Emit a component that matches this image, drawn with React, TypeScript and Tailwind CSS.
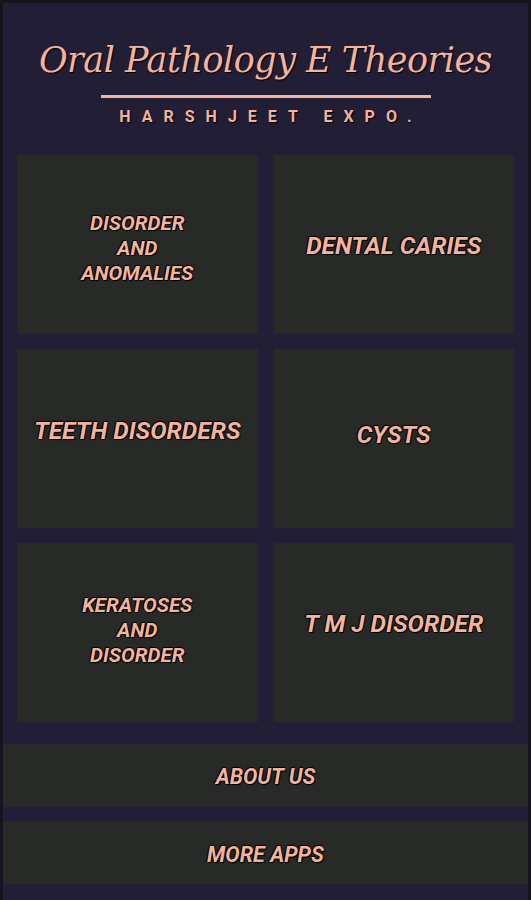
const tiles = [
  { lines: ["DISORDER", "AND", "ANOMALIES"], nudge: "mt-[7px]" },
  { lines: ["DENTAL CARIES"], nudge: "mt-[3px]" },
  { lines: ["TEETH DISORDERS"], nudge: "mb-[15px]" },
  { lines: ["CYSTS"], nudge: "mb-[7px]" },
  { lines: ["KERATOSES", "AND", "DISORDER"], nudge: "mb-[5px]" },
  { lines: ["T M J DISORDER"], nudge: "mb-[17px]" },
];

const label =
  "font-['Roboto',sans-serif] font-bold italic text-[#f3b39d] text-center [text-shadow:1px_1px_1px_#000,-1px_0_1px_#000,0_-1px_1px_#000]";

export default function App() {
  return (
    <div className="w-[531px] h-[900px] bg-[#16141f] px-[3px] pt-[3px] overflow-hidden">
      <div className="h-full bg-[#221e36] flex flex-col">
        <header className="flex flex-col items-center pt-[34px] pb-[30px]">
          <h1 className="font-['DejaVu_Serif',serif] italic text-[35px] leading-[46px] text-[#f3b39d] tracking-[-0.5px] [text-shadow:1px_1px_1px_#000]">
            Oral Pathology E Theories
          </h1>
          <div className="mt-[12px] w-[330px] h-[3px] bg-[#f3b39d]" />
          <p className="mt-[11px] pl-[11px] font-['Roboto',sans-serif] font-bold text-[16px] leading-[16px] tracking-[11px] text-[#f3b39d] [text-shadow:1px_1px_1px_#000]">
            HARSHJEET EXPO.
          </p>
        </header>

        <div className="grid grid-cols-2 gap-x-[16px] gap-y-[15px] px-[14px]">
          {tiles.map((t, i) => (
            <div
              key={i}
              className="h-[179px] bg-[#272a27] flex flex-col items-center justify-center"
            >
              <div className={`flex flex-col items-center ${t.nudge}`}>
                {t.lines.length > 1 ? (
                  t.lines.map((l) => (
                    <span key={l} className={`${label} text-[20.5px] leading-[25px]`}>
                      {l}
                    </span>
                  ))
                ) : (
                  <span className={`${label} text-[24.5px] leading-[30px]`}>
                    {t.lines[0]}
                  </span>
                )}
              </div>
            </div>
          ))}
        </div>

        <div className="mt-[22px] flex flex-col gap-[15px]">
          <button className="h-[63px] bg-[#272a27] flex items-center justify-center">
            <span className={`${label} text-[21.5px] mt-[4px]`}>ABOUT US</span>
          </button>
          <button className="h-[62px] bg-[#272a27] flex items-center justify-center">
            <span className={`${label} text-[21.5px] mt-[4px]`}>MORE APPS</span>
          </button>
        </div>
      </div>
    </div>
  );
}
